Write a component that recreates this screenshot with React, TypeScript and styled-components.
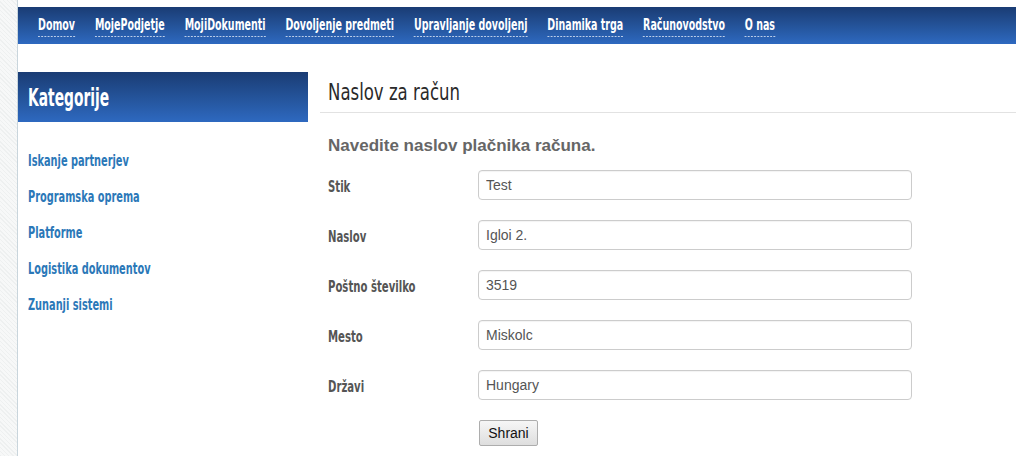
import React from "react"
import styled, { createGlobalStyle } from "styled-components"

const GlobalStyle = createGlobalStyle`
  html, body {
    margin: 0;
    padding: 0;
    background: #f3f4f4;
    background-image: repeating-linear-gradient(45deg, #eef0f0 0 1px, #f7f8f8 1px 3px);
  }
  #root {
    min-height: 456px;
  }
`

// no Oswald offline: DejaVu Sans Condensed squeezed horizontally stands in for it
const condensed = `"DejaVu Sans Condensed", "Liberation Sans", sans-serif`
const blueBar = `linear-gradient(to bottom, #1a3c74 0%, #245399 50%, #2e69c0 100%)`

const Frame = styled.div`
  margin-left: 17px;
  min-height: 456px;
  background: #fff;
  border-left: 1px solid #c9d5dc;
  overflow: hidden;
  padding-top: 7px;
  box-sizing: border-box;
`

const NavBar = styled.nav`
  position: relative;
  margin-left: -10px;
  height: 37px;
  background: ${blueBar};
  padding: 9px 0 0 30px;
  box-sizing: border-box;

  &::after {
    content: "";
    position: absolute;
    left: 0;
    top: 37px;
    width: 0;
    height: 0;
    border-top: 9px solid #10254a;
    border-left: 9px solid transparent;
    transform: scaleX(-1);
  }
`

const NavList = styled.div`
  display: flex;
  align-items: flex-start;
  gap: 31px;
  white-space: nowrap;
  transform: scaleX(0.64);
  transform-origin: left center;
`

const NavLink = styled.a`
  font-family: ${condensed};
  font-weight: bold;
  font-size: 16.5px;
  color: #fff;
  text-decoration: none;
  padding-bottom: 2px;
  border-bottom: 1px dashed #dfe8f5;
  line-height: 18px;
`

const Squeeze = styled.span<{ $scale: number }>`
  display: inline-block;
  white-space: nowrap;
  transform: scaleX(${(p) => p.$scale});
  transform-origin: left center;
`

const Body = styled.div`
  display: flex;
  gap: 12px;
  padding-top: 28px;
`

const Sidebar = styled.aside`
  width: 290px;
  flex-shrink: 0;
`

const SideHeader = styled.h2`
  margin: 0;
  height: 50px;
  background: ${blueBar};
  color: #fff;
  font-family: ${condensed};
  font-weight: bold;
  font-size: 24px;
  line-height: 50px;
  padding: 1px 0 0 10px;
  box-sizing: border-box;
`

const SideList = styled.ul`
  list-style: none;
  margin: 0;
  padding: 29px 0 0 10px;
  display: flex;
  flex-direction: column;
  gap: 17px;
`

const SideLink = styled.a`
  display: block;
  font-family: ${condensed};
  font-weight: bold;
  font-size: 16px;
  line-height: 19px;
  color: #2b78b8;
  text-decoration: none;
`

const Main = styled.main`
  flex: 1;
`

const Title = styled.h1`
  margin: 0;
  font-family: ${condensed};
  font-weight: normal;
  font-size: 23px;
  color: #2a2a2a;
  padding: 7px 0 0 8px;
  height: 41px;
  box-sizing: border-box;
  border-bottom: 1px solid #e2e2e2;
`

const Lead = styled.h3`
  margin: 0;
  padding: 23px 0 0 8px;
  font-family: "Liberation Sans", Arial, sans-serif;
  font-weight: bold;
  font-size: 17px;
  color: #666;
`

const Form = styled.form`
  padding: 14px 0 0 8px;
  display: flex;
  flex-direction: column;
  gap: 20px;
`

const Row = styled.div`
  display: flex;
  align-items: center;
  height: 30px;
`

const Label = styled.label`
  width: 150px;
  flex-shrink: 0;
  font-family: ${condensed};
  font-weight: bold;
  font-size: 15px;
  color: #555;
  padding-top: 4px;
`

const Input = styled.input`
  width: 434px;
  height: 30px;
  box-sizing: border-box;
  border: 1px solid #ccc;
  border-radius: 4px;
  padding: 0 7px;
  font-family: "Liberation Sans", Arial, sans-serif;
  font-size: 14px;
  color: #555;
  box-shadow: inset 0 1px 1px rgba(0, 0, 0, 0.05);
  outline: none;
`

const Button = styled.button`
  margin-left: 151px;
  width: 59px;
  height: 26px;
  border: 1px solid #adadad;
  border-radius: 2px;
  background: linear-gradient(to bottom, #f6f6f6, #dedede);
  font-family: "Liberation Sans", Arial, sans-serif;
  font-size: 14px;
  color: #111;
  padding: 0;
`

const navItems = [
  "Domov",
  "MojePodjetje",
  "MojiDokumenti",
  "Dovoljenje predmeti",
  "Upravljanje dovoljenj",
  "Dinamika trga",
  "Računovodstvo",
  "O nas",
]

const categories = [
  "Iskanje partnerjev",
  "Programska oprema",
  "Platforme",
  "Logistika dokumentov",
  "Zunanji sistemi",
]

const fields = [
  { label: "Stik", value: "Test" },
  { label: "Naslov", value: "Igloi 2." },
  { label: "Poštno številko", value: "3519" },
  { label: "Mesto", value: "Miskolc" },
  { label: "Državi", value: "Hungary" },
]

export default function App() {
  return (
    <>
      <GlobalStyle />
      <Frame>
        <NavBar>
          <NavList>
            {navItems.map((item) => (
              <NavLink key={item} href="#">
                {item}
              </NavLink>
            ))}
          </NavList>
        </NavBar>
        <Body>
          <Sidebar>
            <SideHeader>
              <Squeeze $scale={0.64}>Kategorije</Squeeze>
            </SideHeader>
            <SideList>
              {categories.map((c) => (
                <li key={c}>
                  <SideLink href="#">
                    <Squeeze $scale={0.68}>{c}</Squeeze>
                  </SideLink>
                </li>
              ))}
            </SideList>
          </Sidebar>
          <Main>
            <Title>
              <Squeeze $scale={0.8}>Naslov za račun</Squeeze>
            </Title>
            <Lead>Navedite naslov plačnika računa.</Lead>
            <Form onSubmit={(e) => e.preventDefault()}>
              {fields.map((f) => (
                <Row key={f.label}>
                  <Label>
                    <Squeeze $scale={0.75}>{f.label}</Squeeze>
                  </Label>
                  <Input defaultValue={f.value} />
                </Row>
              ))}
              <div>
                <Button type="submit">Shrani</Button>
              </div>
            </Form>
          </Main>
        </Body>
      </Frame>
    </>
  )
}
